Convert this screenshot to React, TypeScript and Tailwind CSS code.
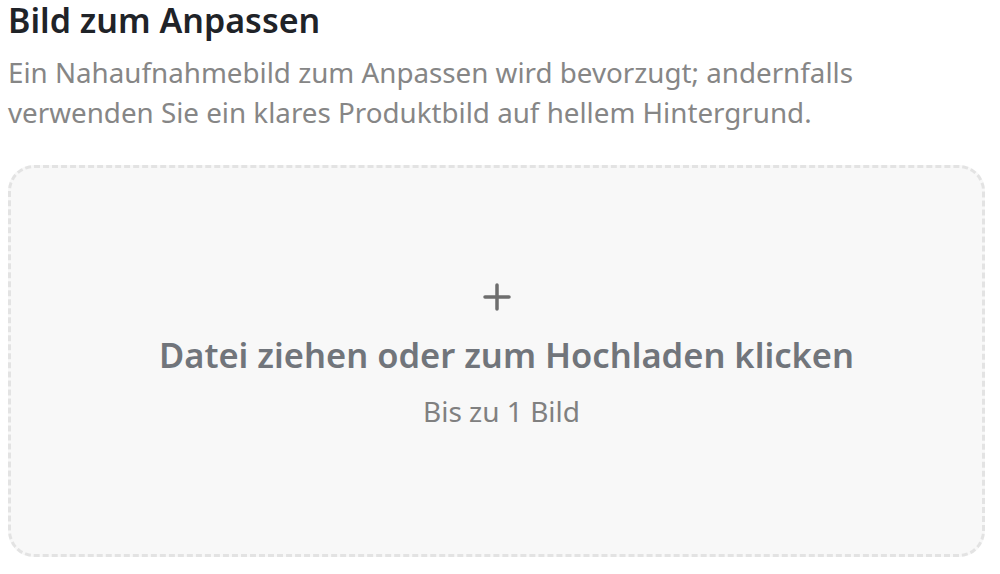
export default function App() {
  return (
    <div className="min-h-[574px] bg-white px-[8px] font-['Noto_Sans',sans-serif]">
      <h2 className="text-[34px] leading-[40px] font-semibold text-[#1f2328]">Bild zum Anpassen</h2>
      <p className="mt-[12px] text-[27.75px] leading-[40px] text-[#868686] max-w-[900px]">
        Ein Nahaufnahmebild zum Anpassen wird bevorzugt; andernfalls verwenden Sie ein klares Produktbild auf hellem Hintergrund.
      </p>
      <div className="mt-[33px] mr-[7px] h-[392px] rounded-[26px] border-[3px] border-dashed border-[#e3e3e3] bg-[#f8f8f8] flex flex-col items-center justify-center pb-[12px]">
        <svg width="28" height="28" viewBox="0 0 28 28" className="mb-[24px]">
          <path d="M14 2v24M2 14h24" stroke="#6e6e6e" strokeWidth="3.5" strokeLinecap="round" />
        </svg>
        <p className="ml-[20px] text-[34.5px] leading-[40px] font-semibold text-[#71757b]">Datei ziehen oder zum Hochladen klicken</p>
        <p className="ml-[10px] mt-[20px] text-[28px] leading-[32px] text-[#808080]">Bis zu 1 Bild</p>
      </div>
    </div>
  )
}
